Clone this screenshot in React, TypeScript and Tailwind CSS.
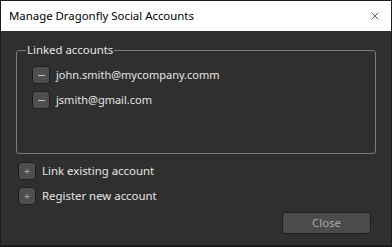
import { X } from 'lucide-react'

const accounts = ['john.smith@mycompany.comm', 'jsmith@gmail.com']

function ToolButton({ kind }: { kind: 'add' | 'remove' }) {
	return (
		<button className="flex h-[18px] w-[18px] shrink-0 items-center justify-center rounded-[4px] border border-[#1f1f1f] bg-[#4e4e4e]">
			{kind === 'remove' ? (
				<span className="h-[1px] w-[7px] bg-[#c4c4c4]" />
			) : (
				<span className="text-[10px] leading-none text-[#9aa8bc]">+</span>
			)}
		</button>
	)
}

export default function App() {
	return (
		<div className="flex h-[247px] w-[392px] flex-col border border-b-2 border-[#1c1c1c] bg-[#2f2f2f] font-['Noto_Sans',sans-serif] text-[11px]">
			<div className="flex h-[30px] shrink-0 items-center justify-between bg-white pl-[8px] pr-[10px]">
				<span className="text-[11.4px] text-black">Manage Dragonfly Social Accounts</span>
				<X className="h-[12px] w-[12px] text-black" strokeWidth={1.3} />
			</div>

			<div className="flex flex-1 flex-col px-[15px]">
				<fieldset className="mt-[11px] h-[112px] rounded-[3px] border border-[#7b7b7b] pl-[9px] pt-[8px]">
					<legend className="px-[1px] text-[11.4px] leading-[16px] text-[#e6e6e6]">Linked accounts</legend>
					<div className="ml-[6px] flex flex-col gap-[7px]">
						{accounts.map((email) => (
							<div key={email} className="flex items-center gap-[6px]">
								<ToolButton kind="remove" />
								<span className="text-[#e6e6e6]">{email}</span>
							</div>
						))}
					</div>
				</fieldset>

				<div className="ml-[2px] mt-[8px] flex flex-col gap-[7px]">
					<div className="flex items-center gap-[6px]">
						<ToolButton kind="add" />
						<span className="text-[11.4px] text-[#e6e6e6]">Link existing account</span>
					</div>
					<div className="flex items-center gap-[6px]">
						<ToolButton kind="add" />
						<span className="text-[11.4px] text-[#e6e6e6]">Register new account</span>
					</div>
				</div>

				<div className="mt-[7px] flex justify-end pr-[5px]">
					<button className="h-[22px] w-[89px] rounded-[4px] border border-[#1f1f1f] bg-[#4b4b4b] text-[11.4px] text-[#a9a9a9]">
						Close
					</button>
				</div>
			</div>
		</div>
	)
}
